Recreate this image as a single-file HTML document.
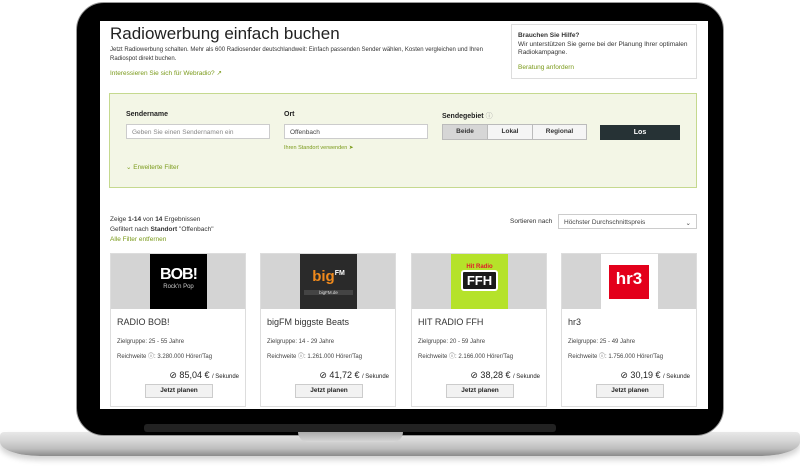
<!DOCTYPE html>
<html><head><meta charset="utf-8"><style>
*{margin:0;padding:0;box-sizing:border-box}
body{width:800px;height:468px;background:#fff;position:relative;overflow:hidden;font-family:"Liberation Sans",sans-serif;color:#333}
.a{position:absolute}
.bezel{left:76px;top:2px;width:648px;height:434px;background:#000;border-radius:28px;border:1px solid #999}
.screen{left:100px;top:21px;width:608px;height:388px;background:#fff;overflow:hidden}
.s{font-size:6.5px;color:#333;white-space:nowrap}
.g{color:#7a9a1a}
.lbl{font-size:7px;font-weight:bold;color:#222}
.inp{background:#fff;border:1px solid #ccc;height:15px;font-size:6.5px;color:#888;padding:4px 5px}
.card{background:#fff;border:1px solid #ddd;width:136px;height:154px}
.card .img{position:absolute;left:0;top:0;width:134px;height:55px;background:#d4d4d4}
.card .logo{position:absolute;left:39px;top:0;width:57px;height:55px}
.card .nm{position:absolute;left:6px;top:63px;font-size:9px;color:#333}
.card .z{position:absolute;left:6px;top:85px;font-size:6px;color:#444}
.card .r{position:absolute;left:6px;top:97px;font-size:6px;color:#444}
.card .p{position:absolute;right:6px;top:116px;font-size:9px;color:#222;white-space:nowrap}
.card .p small{font-size:6px}
.card .b{position:absolute;left:34px;top:130px;width:68px;height:14px;background:#f2f2f2;border:1px solid #ccc;font-size:6.5px;font-weight:bold;text-align:center;line-height:12px;color:#222}
</style></head><body>
<div class="a" style="left:0;top:432px;width:800px;height:24px;border-radius:4px 4px 40px 40px/4px 4px 14px 14px;background:linear-gradient(#e8e8e8,#d6d6d6 35%,#bdbdbd 70%,#8a8a8a);box-shadow:0 4px 6px rgba(0,0,0,.18)"></div>
<div class="a bezel"></div>
<div class="a" style="left:298px;top:432px;width:105px;height:10px;background:linear-gradient(#aaa,#d8d8d8);border-radius:0 0 10px 10px"></div>
<div class="a" style="left:144px;top:424px;width:412px;height:8px;background:#222;border-radius:3px"></div>
<div class="a screen">
 <div class="a" style="left:10px;top:3px;font-size:17px;color:#222">Radiowerbung einfach buchen</div>
 <div class="a s" style="left:10px;top:25px;line-height:9px;font-size:6px">Jetzt Radiowerbung schalten. Mehr als 600 Radiosender deutschlandweit: Einfach passenden Sender wählen, Kosten vergleichen und Ihren<br>Radiospot direkt buchen.</div>
 <div class="a s g" style="left:10px;top:48px">Interessieren Sie sich für Webradio? ↗</div>
 <div class="a" style="left:411px;top:3px;width:186px;height:55px;border:1px solid #ddd;background:#fff"></div>
 <div class="a s" style="left:418px;top:11px;line-height:8.5px"><b>Brauchen Sie Hilfe?</b><br>Wir unterstützen Sie gerne bei der Planung Ihrer optimalen<br>Radiokampagne.</div>
 <div class="a s g" style="left:418px;top:43px">Beratung anfordern</div>
 <div class="a" style="left:9px;top:72px;width:588px;height:95px;background:#f3f6e6;border:1px solid #c5d98f"></div>
 <div class="a lbl" style="left:26px;top:90px">Sendername</div>
 <div class="a inp" style="left:26px;top:103px;width:144px">Geben Sie einen Sendernamen ein</div>
 <div class="a lbl" style="left:184px;top:90px">Ort</div>
 <div class="a inp" style="left:184px;top:103px;width:144px;color:#444">Offenbach</div>
 <div class="a s g" style="left:184px;top:124px;font-size:5.5px">Ihren Standort verwenden ➤</div>
 <div class="a lbl" style="left:342px;top:90px">Sendegebiet <span style="font-weight:normal;color:#999">ⓘ</span></div>
 <div class="a" style="left:342px;top:103px;width:145px;height:16px;border:1px solid #bbb;display:flex;font-size:6.5px;font-weight:bold;background:#f5f5f5">
  <div style="width:45px;text-align:center;line-height:14px;background:#d6d6d6;border-right:1px solid #bbb">Beide</div>
  <div style="width:45px;text-align:center;line-height:14px;border-right:1px solid #bbb">Lokal</div>
  <div style="flex:1;text-align:center;line-height:14px">Regional</div>
 </div>
 <div class="a" style="left:500px;top:104px;width:80px;height:15px;background:#263235;color:#fff;font-size:7px;font-weight:bold;text-align:center;line-height:15px">Los</div>
 <div class="a s g" style="left:26px;top:142px">⌄ Erweiterte Filter</div>
 <div class="a s" style="left:10px;top:194px;line-height:10px">Zeige <b>1-14</b> von <b>14</b> Ergebnissen<br>Gefiltert nach <b>Standort</b> "Offenbach"<br><span class="g">Alle Filter entfernen</span></div>
 <div class="a s" style="left:410px;top:197px">Sortieren nach</div>
 <div class="a inp" style="left:458px;top:193px;width:139px;color:#444">Höchster Durchschnittspreis<span style="position:absolute;right:5px">⌄</span></div>

 <div class="a card" style="left:10px;top:232px"><div class="img"></div>
  <div class="logo" style="background:#000;color:#fff;text-align:center"><div style="font-size:16px;font-weight:bold;margin-top:12px;letter-spacing:-1px">BOB!</div><div style="font-size:6px;color:#ccc">Rock'n Pop</div></div>
  <div class="nm">RADIO BOB!</div><div class="z">Zielgruppe: 25 - 55 Jahre</div><div class="r">Reichweite ⓘ: 3.280.000 Hörer/Tag</div>
  <div class="p">⊘ 85,04 € <small>/ Sekunde</small></div><div class="b">Jetzt planen</div></div>
 <div class="a card" style="left:160px;top:232px"><div class="img"></div>
  <div class="logo" style="background:#2a2a2a;text-align:center"><div style="font-size:15px;font-weight:bold;color:#f08a1c;margin-top:14px">big<sup style="font-size:7px;color:#fff">FM</sup></div><div style="background:#444;color:#ddd;font-size:4.5px;margin:5px 4px 0">bigFM.de</div></div>
  <div class="nm">bigFM biggste Beats</div><div class="z">Zielgruppe: 14 - 29 Jahre</div><div class="r">Reichweite ⓘ: 1.261.000 Hörer/Tag</div>
  <div class="p">⊘ 41,72 € <small>/ Sekunde</small></div><div class="b">Jetzt planen</div></div>
 <div class="a card" style="left:311px;top:232px"><div class="img"></div>
  <div class="logo" style="background:#b5e22a;text-align:center"><div style="font-size:6px;color:#e01a2a;font-weight:bold;margin-top:10px">Hit Radio</div><div style="display:inline-block;background:#1a1a1a;color:#fff;font-size:13px;font-weight:bold;padding:1px 4px;border:2px solid #fff;border-radius:3px">FFH</div></div>
  <div class="nm">HIT RADIO FFH</div><div class="z">Zielgruppe: 20 - 59 Jahre</div><div class="r">Reichweite ⓘ: 2.166.000 Hörer/Tag</div>
  <div class="p">⊘ 38,28 € <small>/ Sekunde</small></div><div class="b">Jetzt planen</div></div>
 <div class="a card" style="left:461px;top:232px"><div class="img"></div>
  <div class="logo" style="background:#fff"><div style="position:absolute;left:8px;top:11px;width:40px;height:34px;background:#e3001b;color:#fff;font-size:17px;font-weight:bold;text-align:center;line-height:28px">hr3</div></div>
  <div class="nm">hr3</div><div class="z">Zielgruppe: 25 - 49 Jahre</div><div class="r">Reichweite ⓘ: 1.756.000 Hörer/Tag</div>
  <div class="p">⊘ 30,19 € <small>/ Sekunde</small></div><div class="b">Jetzt planen</div></div>
</div>
</body></html>
